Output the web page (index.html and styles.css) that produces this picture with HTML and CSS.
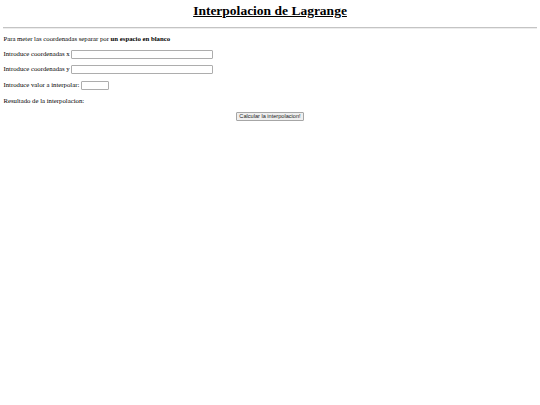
FILE: index.html
```html
<!DOCTYPE html>
<html lang="es">
<head>
<meta charset="utf-8">
<title>Interpolacion de Lagrange</title>
<link rel="stylesheet" href="styles.css">
</head>
<body class="page">
<h1 class="title"><u>Interpolacion de Lagrange</u></h1>
<hr class="rule">
<p class="line intro">Para meter las coordenadas separar por <b>un espacio en blanco</b></p>
<p class="line">Introduce coordenadas x <input class="field field-wide" type="text"></p>
<p class="line">Introduce coordenadas y <input class="field field-wide" type="text"></p>
<p class="line">Introduce valor a interpolar: <input class="field field-small" type="text"></p>
<p class="line">Resultado de la interpolacion: <span class="result"></span></p>
<div class="actions"><button class="calc" type="button">Calcular la interpolacion!</button></div>
</body>
</html>
```
FILE: styles.css
```css
.page {
  margin: 3.4px;
  font-family: "Liberation Serif", "Times New Roman", serif;
  font-size: 6.75px;
  line-height: 7.8px;
  color: #000;
  background: #fff;
}
.title {
  text-align: center;
  font-size: 13.5px;
  line-height: 15.5px;
  margin: 0 0 8.6px;
  font-weight: bold;
}
.rule {
  margin: 3.4px 0 0;
  height: 0;
  border: 0;
  border-top: 1px solid #c4c4c4;
  border-bottom: 1px solid #ededed;
}
.line {
  margin: 6.9px 0;
}
.intro {
  margin-top: 5.4px;
}
.field {
  box-sizing: border-box;
  height: 9px;
  padding: 0 1px;
  margin: 0;
  border: 1px solid #adadad;
  border-radius: 1px;
  vertical-align: middle;
  font-family: "Liberation Sans", Arial, sans-serif;
  font-size: 5.6px;
  background: #fff;
}
.field-wide {
  width: 142px;
}
.field-small {
  width: 28px;
}
.actions {
  text-align: center;
}
.calc {
  box-sizing: border-box;
  height: 9px;
  padding: 0 2px;
  border: 1px solid #a6a6a6;
  border-radius: 1px;
  background: #efefef;
  color: #222;
  font-family: "Liberation Sans", Arial, sans-serif;
  font-size: 5.6px;
  line-height: 7px;
}
```
